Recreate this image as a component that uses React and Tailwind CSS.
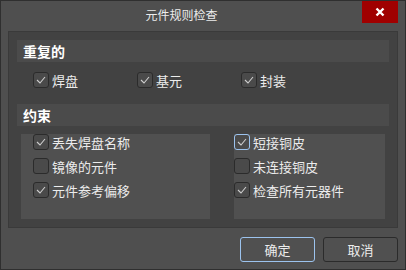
import React from 'react';

const font = { fontFamily: '"Noto Sans CJK SC", "Noto Sans", sans-serif' };

const Check = ({ checked, focused }) => (
  <span
    className={`w-[16px] h-[16px] shrink-0 rounded-[3px] border bg-[#4a4a4a] flex items-center justify-center ${
      focused ? 'border-[#9cc3ee]' : 'border-[#2b2b2b]'
    }`}
  >
    {checked && (
      <svg width="10" height="8" viewBox="0 0 10 8" fill="none">
        <path d="M1 4 L4 7 L9 1" stroke="#cfcfcf" strokeWidth="1.1" />
      </svg>
    )}
  </span>
);

const Item = ({ label, checked, focused }) => (
  <label className="flex items-center gap-[3px] text-[13px] text-[#ececec] leading-none">
    <Check checked={checked} focused={focused} />
    <span>{label}</span>
  </label>
);

const SectionHeader = ({ title }) => (
  <div className="h-[22px] bg-[#4b4b4b] flex items-center pl-[6px] text-[14px] font-bold text-white">
    {title}
  </div>
);

export default function App() {
  return (
    <div
      className="w-[406px] h-[270px] bg-[#4f4f4f] border border-[#2f2f2f] flex flex-col"
      style={font}
    >
      {/* Title bar */}
      <div className="h-[30px] flex">
        <div className="flex-1 flex items-center justify-center text-[12px] text-[#ececec] pb-[2px]">
          元件规则检查
        </div>
        <button className="w-[36px] h-[22px] mr-[7px] bg-[#a00000] flex items-center justify-center">
          <svg width="10" height="10" viewBox="0 0 10 10">
            <path d="M1.5 1.5 L8.5 8.5 M8.5 1.5 L1.5 8.5" stroke="#fff" strokeWidth="2.4" />
          </svg>
        </button>
      </div>

      {/* Panel */}
      <div className="mx-[7px] h-[197px] bg-[#424242] border border-[#3a3a3a] px-[8px] pt-[8px]">
        <SectionHeader title="重复的" />
        <div className="flex h-[20px] items-center mt-[8px] pl-[16px]">
          <div className="w-[104px]"><Item label="焊盘" checked /></div>
          <div className="w-[104px]"><Item label="基元" checked /></div>
          <div className="w-[104px]"><Item label="封装" checked /></div>
        </div>

        <div className="mt-[14px]">
          <SectionHeader title="约束" />
        </div>
        <div className="flex mt-[8px] pl-[4px]">
          <div className="w-[189px] h-[85px] bg-[#505050] pl-[12px] flex flex-col gap-[8px]">
            <Item label="丢失焊盘名称" checked />
            <Item label="镜像的元件" />
            <Item label="元件参考偏移" checked />
          </div>
          <div className="ml-[24px] w-[151px] h-[85px] bg-[#505050] flex flex-col gap-[8px]">
            <Item label="短接铜皮" checked focused />
            <Item label="未连接铜皮" />
            <Item label="检查所有元器件" checked />
          </div>
        </div>
      </div>

      {/* Buttons */}
      <div className="flex justify-end gap-[8px] mt-[9px] mr-[7px]">
        <button className="w-[75px] h-[25px] rounded-[3px] border border-[#9cc3ee] bg-[#505050] text-[13px] text-[#ececec]">
          确定
        </button>
        <button className="w-[75px] h-[25px] rounded-[3px] border border-[#2b2b2b] bg-[#505050] text-[13px] text-[#ececec]">
          取消
        </button>
      </div>
    </div>
  );
}
